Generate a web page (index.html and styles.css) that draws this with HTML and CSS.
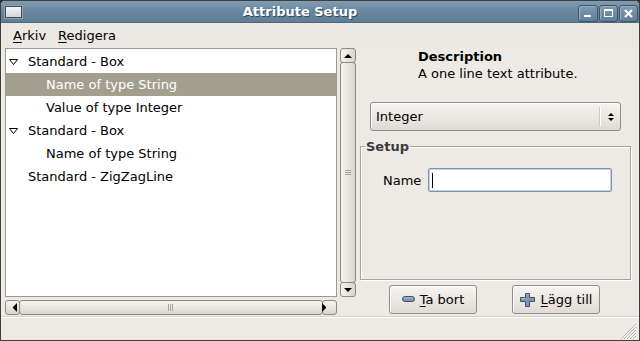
FILE: index.html
```html
<!DOCTYPE html>
<html lang="sv">
<head>
    <meta charset="UTF-8">
    <meta name="viewport" content="width=device-width, initial-scale=1.0">
    <title>Attribute Setup</title>
    <link rel="stylesheet" href="styles.css">
</head>
<body>
    <div class="window">
        <div class="titlebar">
            <div class="win-icon"></div>
            <div class="title">Attribute Setup</div>
            <div class="win-buttons">
                <div class="win-btn wide">
                    <svg width="20" height="17"><rect x="6" y="10" width="7" height="2" fill="#fff"/></svg>
                </div>
                <div class="win-btn">
                    <svg width="19" height="17"><rect x="5.5" y="4.5" width="8" height="7" fill="none" stroke="#fff"/><rect x="5" y="4" width="9" height="2" fill="#fff"/></svg>
                </div>
                <div class="win-btn">
                    <svg width="19" height="17"><path d="M6 5 L13 12 M13 5 L6 12" stroke="#fff" stroke-width="2.2"/></svg>
                </div>
            </div>
        </div>

        <div class="menubar">
            <span class="menu-item"><u>A</u>rkiv</span>
            <span class="menu-item"><u>R</u>edigera</span>
        </div>

        <div class="main">
            <div class="left">
                <div class="tree-area">
                    <div class="tree">
                        <div class="row top">
                            <svg class="expander" width="9" height="6"><polygon points="0.5,0.5 8.5,0.5 4.5,5.5" fill="#fff" stroke="#000"/></svg>
                            Standard - Box
                        </div>
                        <div class="row child selected">Name of type String</div>
                        <div class="row child">Value of type Integer</div>
                        <div class="row top">
                            <svg class="expander" width="9" height="6"><polygon points="0.5,0.5 8.5,0.5 4.5,5.5" fill="#fff" stroke="#000"/></svg>
                            Standard - Box
                        </div>
                        <div class="row child">Name of type String</div>
                        <div class="row leaf">Standard - ZigZagLine</div>
                    </div>
                    <div class="vscroll">
                        <div class="sb-btn"><span class="arrow up"></span></div>
                        <div class="sb-thumb"><span class="grip-h"></span></div>
                        <div class="sb-btn"><span class="arrow down"></span></div>
                    </div>
                </div>
                <div class="hscroll">
                    <div class="sb-btn"><span class="arrow left"></span></div>
                    <div class="sb-thumb"><span class="grip-v"></span></div>
                    <div class="sb-btn"><span class="arrow right"></span></div>
                </div>
            </div>

            <div class="right">
                <div class="description">
                    <div class="desc-title">Description</div>
                    <div class="desc-text">A one line text attribute.</div>
                </div>

                <div class="combo">
                    <span class="combo-text">Integer</span>
                    <span class="combo-sep"></span>
                    <span class="combo-arrows">
                        <span class="arrow up small"></span>
                        <span class="arrow down small"></span>
                    </span>
                </div>

                <fieldset class="frame">
                    <legend>Setup</legend>
                    <div class="field">
                        <label for="name">Name</label>
                        <div class="entry"><span class="caret"></span></div>
                    </div>
                </fieldset>

                <div class="buttons">
                    <button class="btn">
                        <svg width="13" height="7"><rect x="0.5" y="0.5" width="12" height="5" rx="2.5" fill="#7f97ae" stroke="#3d526a"/><rect x="2" y="1.5" width="9" height="1" fill="#b9c8d6"/></svg>
                        <span><u>T</u>a bort</span>
                    </button>
                    <button class="btn">
                        <svg width="16" height="14"><path d="M5.5 0.5 H9.5 V4.5 H14.5 V8.5 H9.5 V13.5 H5.5 V8.5 H0.5 V4.5 H5.5 Z" fill="#7f97ae" stroke="#3d526a" stroke-linejoin="round"/><path d="M6.5 1.5 H8.5 M1.5 5.5 H5.5" stroke="#b9c8d6"/></svg>
                        <span><u>L</u>ägg till</span>
                    </button>
                </div>
            </div>
        </div>

        <div class="statusbar">
            <svg class="resize-grip" width="20" height="18">
                <path d="M19 3 L4 18 M19 6 L7 18 M19 9 L10 18 M19 12 L13 18 M19 15 L16 18" stroke="#b6b1a9"/>
                <path d="M19 4 L5 18 M19 7 L8 18 M19 10 L11 18 M19 13 L14 18 M19 16 L17 18" stroke="#fff"/>
            </svg>
        </div>
    </div>
</body>
</html>
```

FILE: styles.css
```css
* {
    box-sizing: border-box;
}
body {
    margin: 0;
    background-color: #2e2e2e;
    font-family: "DejaVu Sans", sans-serif;
    font-size: 13px;
    color: #000;
}
.window {
    width: 640px;
    height: 341px;
    display: flex;
    flex-direction: column;
    background-color: #edeae5;
    border: 1px solid #3e3e3e;
    border-radius: 5px 5px 0 0;
    overflow: hidden;
}

/* title bar */
.titlebar {
    height: 22px;
    flex-shrink: 0;
    display: flex;
    align-items: center;
    background: linear-gradient(#7f9cb1, #6787a0 50%, #5e7e95);
    border-bottom: 1px solid #4f6a7e;
}
.win-icon {
    width: 17px;
    height: 12px;
    margin-left: 4px;
    background: linear-gradient(#f4f4f4, #d6d6d6);
    border: 1px solid #3f4e5a;
    box-shadow: 0 0 0 1px #8aa2b4;
}
.title {
    flex: 1;
    text-align: center;
    color: #fff;
    font-weight: bold;
    line-height: 22px;
    text-shadow: 1px 1px 0 #34495a;
}
.win-buttons {
    display: flex;
    gap: 1px;
    margin-right: 1px;
    margin-top: 3px;
}
.win-btn {
    width: 19px;
    height: 17px;
    border: 1px solid #3e5568;
    border-radius: 3px;
    background: linear-gradient(#7d9ab0, #60809a);
    box-shadow: inset 1px 1px 0 #96b0c3;
    position: relative;
}
.win-btn.wide {
    width: 20px;
}
.win-btn svg {
    position: absolute;
    left: -1px;
    top: -1px;
}

/* menu */
.menubar {
    height: 24px;
    flex-shrink: 0;
    display: flex;
    align-items: center;
    padding-left: 6px;
    background-color: #ebe7e2;
}
.menu-item {
    padding: 0 6px;
}
.menu-item u {
    text-decoration-thickness: 1px;
    text-underline-offset: 2px;
}

/* main area */
.main {
    flex: 1;
    display: flex;
}
.left {
    width: 355px;
    padding: 1px 0 0 4px;
}
.tree-area {
    display: flex;
    height: 249px;
}
.tree {
    width: 332px;
    background-color: #fff;
    border: 1px solid #9d9890;
    padding-top: 1px;
}
.row {
    height: 23px;
    display: flex;
    align-items: center;
    white-space: nowrap;
}
.row.top {
    padding-left: 3px;
}
.row.child {
    padding-left: 40px;
}
.row.leaf {
    padding-left: 22px;
}
.row.selected {
    background-color: #a29f8f;
    color: #fff;
}
.expander {
    margin-right: 10px;
}

/* scrollbars */
.vscroll {
    width: 16px;
    margin-left: 3px;
    display: flex;
    flex-direction: column;
}
.hscroll {
    width: 332px;
    height: 15px;
    margin-top: 3px;
    display: flex;
}
.sb-btn,
.sb-thumb {
    display: flex;
    align-items: center;
    justify-content: center;
    border: 1px solid #8e8a83;
    border-radius: 3px;
}
.vscroll .sb-btn,
.vscroll .sb-thumb {
    background: linear-gradient(to right, #f6f4f1, #e6e2dc 60%, #d9d4cd);
}
.hscroll .sb-btn,
.hscroll .sb-thumb {
    background: linear-gradient(#f6f4f1, #e6e2dc 60%, #d9d4cd);
}
.vscroll .sb-btn {
    height: 15px;
}
.hscroll .sb-btn {
    width: 15px;
}
.sb-thumb {
    flex: 1;
}
.vscroll .sb-thumb {
    margin: -1px 0;
}
.hscroll .sb-thumb {
    margin: 0 -1px;
}
.grip-h {
    width: 6px;
    height: 6px;
    background: repeating-linear-gradient(#a9a49c 0 1px, transparent 1px 2px);
}
.grip-v {
    width: 6px;
    height: 7px;
    background: repeating-linear-gradient(to right, #a9a49c 0 1px, transparent 1px 2px);
}
.arrow {
    width: 0;
    height: 0;
    border: 4px solid transparent;
}
.arrow.up {
    border-top: none;
    border-bottom: 4px solid #000;
}
.arrow.down {
    border-bottom: none;
    border-top: 4px solid #000;
}
.arrow.left {
    border-left: none;
    border-right: 4px solid #000;
}
.arrow.right {
    border-right: none;
    border-left: 4px solid #000;
}
.arrow.small {
    border-width: 3px;
}

/* right pane */
.right {
    flex: 1;
    padding: 1px 8px 0 4px;
}
.description {
    margin-left: 58px;
    line-height: 17px;
}
.desc-title {
    font-weight: bold;
}
.combo {
    height: 29px;
    margin: 20px 10px 0 10px;
    display: flex;
    align-items: center;
    border: 1px solid #928d85;
    border-radius: 3px;
    background: linear-gradient(#f6f4f1, #e9e5e0 60%, #dfdad4);
    box-shadow: inset 1px 1px 0 #fff;
}
.combo-text {
    flex: 1;
    padding-left: 5px;
}
.combo-sep {
    width: 2px;
    height: 19px;
    border-left: 1px solid #cfcac2;
    border-right: 1px solid #fff;
}
.combo-arrows {
    width: 19px;
    display: flex;
    flex-direction: column;
    align-items: center;
    gap: 2px;
}
.frame {
    margin: 7px 0 0 0;
    height: 142px;
    padding: 13px 0 0 2px;
    border: 1px solid #a8a39b;
    box-shadow: inset 1px 1px 0 #fff, 1px 1px 0 #fff;
}
.frame legend {
    font-weight: bold;
    color: #3a3a3a;
    padding: 0 1px;
    margin-left: 2px;
    line-height: 17px;
}
.field {
    display: flex;
    align-items: center;
    gap: 7px;
    margin-left: 20px;
}
.entry {
    width: 184px;
    height: 24px;
    background-color: #fff;
    border: 1px solid #7893ab;
    border-radius: 2px;
    box-shadow: inset 0 0 0 1px #c6d4e0;
    display: flex;
    align-items: center;
    padding-left: 3px;
}
.caret {
    width: 1px;
    height: 15px;
    background-color: #000;
}
.buttons {
    display: flex;
    gap: 35px;
    margin: 5px 0 0 29px;
}
.btn {
    width: 88px;
    height: 29px;
    display: flex;
    align-items: center;
    justify-content: center;
    gap: 5px;
    font-family: "DejaVu Sans", sans-serif;
    font-size: 13px;
    color: #000;
    border: 1px solid #928d85;
    border-radius: 3px;
    background: linear-gradient(#f6f4f1, #e9e5e0 60%, #dfdad4);
    box-shadow: inset 1px 1px 0 #fff;
    padding: 0;
}
.btn u {
    text-underline-offset: 2px;
}

/* status bar */
.statusbar {
    height: 24px;
    flex-shrink: 0;
    border-top: 1px solid #d6d1ca;
    box-shadow: inset 0 1px 0 #fff;
    display: flex;
    justify-content: flex-end;
    align-items: flex-end;
}
.resize-grip {
    margin-right: 2px;
    margin-bottom: 1px;
}
```
